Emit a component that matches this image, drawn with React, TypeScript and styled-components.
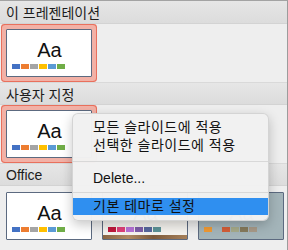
import React from 'react';
import styled, { createGlobalStyle } from 'styled-components';

const GlobalStyle = createGlobalStyle`
  html, body {
    margin: 0;
    padding: 0;
    background: #eeeeee;
    overflow: hidden;
  }
`;

const Panel = styled.div`
  position: relative;
  width: 288px;
  height: 250px;
  box-sizing: border-box;
  border-top: 1px solid #a3a3a3;
  border-right: 1px solid #9c9c9c;
  background: #eeeeee;
  overflow: hidden;
  font-family: "Liberation Sans", "Noto Sans CJK KR", sans-serif;
  color: #1c1c1c;
`;

const SectionHeader = styled.div`
  height: 23px;
  box-sizing: border-box;
  padding-left: 6px;
  display: flex;
  align-items: center;
  font-size: 14px;
  background: linear-gradient(#e6e6e6, #dcdcdc);
  border-bottom: 1px solid #d3d3d3;
  border-top: 1px solid #d9d9d9;
  &:first-child {
    border-top: none;
  }
`;

const ThumbRow = styled.div<{ $padTop: number }>`
  display: flex;
  gap: 10px;
  padding: ${({ $padTop }) => $padTop}px 6px 5px 6px;
`;

const Slide = styled.div<{ $bg: string; $selected?: boolean }>`
  position: relative;
  width: 86px;
  height: 48px;
  flex: none;
  box-sizing: border-box;
  border: 1px solid #5c6a80;
  border-radius: 1px;
  background: ${({ $bg }) => $bg};
  padding: 10px 0 0 5px;
  ${({ $selected }) =>
    $selected &&
    `
      box-shadow: 0 0 0 4px #f2b1a6, 0 0 0 5px #e9705d;
    `}
`;

const Sample = styled.div<{ $color: string }>`
  width: 75px;
  text-align: center;
  font-size: 20px;
  line-height: 20px;
  color: ${({ $color }) => $color};
`;

const Swatches = styled.div`
  display: flex;
  gap: 1px;
  margin-top: 4px;
`;

const Swatch = styled.span<{ $c: string }>`
  width: 8px;
  height: 5px;
  background: ${({ $c }) => $c};
`;

const Wood = styled.div`
  position: absolute;
  left: 0;
  right: 0;
  bottom: 0;
  height: 4px;
  background: linear-gradient(90deg, #8a6544, #b08a62 30%, #7d5a3c 60%, #a7815a);
`;

const Menu = styled.div`
  position: absolute;
  left: 72px;
  top: 112px;
  width: 197px;
  box-sizing: border-box;
  padding: 4px 0 5px;
  background: rgba(241, 241, 241, 0.98);
  border: 1px solid rgba(0, 0, 0, 0.12);
  border-radius: 6px;
  box-shadow: 0 4px 12px rgba(0, 0, 0, 0.22);
  font-size: 14px;
`;

const MenuItem = styled.div<{ $active?: boolean; $h?: number; $wide?: boolean }>`
  height: ${({ $h }) => $h ?? 18}px;
  line-height: ${({ $h }) => $h ?? 18}px;
  padding-left: 20px;
  white-space: nowrap;
  letter-spacing: ${({ $wide }) => ($wide ? '0.5px' : '0')};
  color: #111;
  background: ${({ $active }) => ($active ? '#2f8ff0' : 'transparent')};
`;

const Separator = styled.div<{ $gap: number }>`
  height: 1px;
  margin: ${({ $gap }) => $gap}px 0;
  background: #d8d8d8;
`;

const defaultColors = ['#4472c4', '#ed7d31', '#a5a5a5', '#ffc000', '#5b9bd5', '#70ad47'];
const woodColors = ['#c0183c', '#e0407a', '#b873d8', '#7e5ea8', '#58689e', '#5c9398'];
const slateColors = ['#f09a34', '#a5b5ba', '#d35e38', '#a6ab8a', '#857a5c', '#a89a88'];

const Thumb: React.FC<{ bg: string; ink: string; colors: string[]; selected?: boolean; wood?: boolean }> = ({
  bg,
  ink,
  colors,
  selected,
  wood,
}) => (
  <Slide $bg={bg} $selected={selected}>
    <Sample $color={ink}>Aa</Sample>
    <Swatches>
      {colors.map((c, i) => (
        <Swatch key={i} $c={c} />
      ))}
    </Swatches>
    {wood && <Wood />}
  </Slide>
);

const App: React.FC = () => {
  return (
    <>
      <GlobalStyle />
      <Panel>
        <SectionHeader>이 프레젠테이션</SectionHeader>
        <ThumbRow $padTop={5}>
          <Thumb bg="#ffffff" ink="#111" colors={defaultColors} selected />
        </ThumbRow>
        <SectionHeader>사용자 지정</SectionHeader>
        <ThumbRow $padTop={5}>
          <Thumb bg="#ffffff" ink="#111" colors={defaultColors} selected />
        </ThumbRow>
        <SectionHeader>Office</SectionHeader>
        <ThumbRow $padTop={6}>
          <Thumb bg="#ffffff" ink="#111" colors={defaultColors} />
          <Thumb bg="#f5f3ef" ink="#222" colors={woodColors} wood />
          <Thumb bg="#a3b4b9" ink="#222" colors={slateColors} />
        </ThumbRow>

        <Menu>
          <MenuItem $wide>모든 슬라이드에 적용</MenuItem>
          <MenuItem $wide>선택한 슬라이드에 적용</MenuItem>
          <Separator $gap={7} />
          <MenuItem>Delete...</MenuItem>
          <Separator $gap={5} />
          <MenuItem $active $wide $h={17}>기본 테마로 설정</MenuItem>
        </Menu>
      </Panel>
    </>
  );
};

export default App;
